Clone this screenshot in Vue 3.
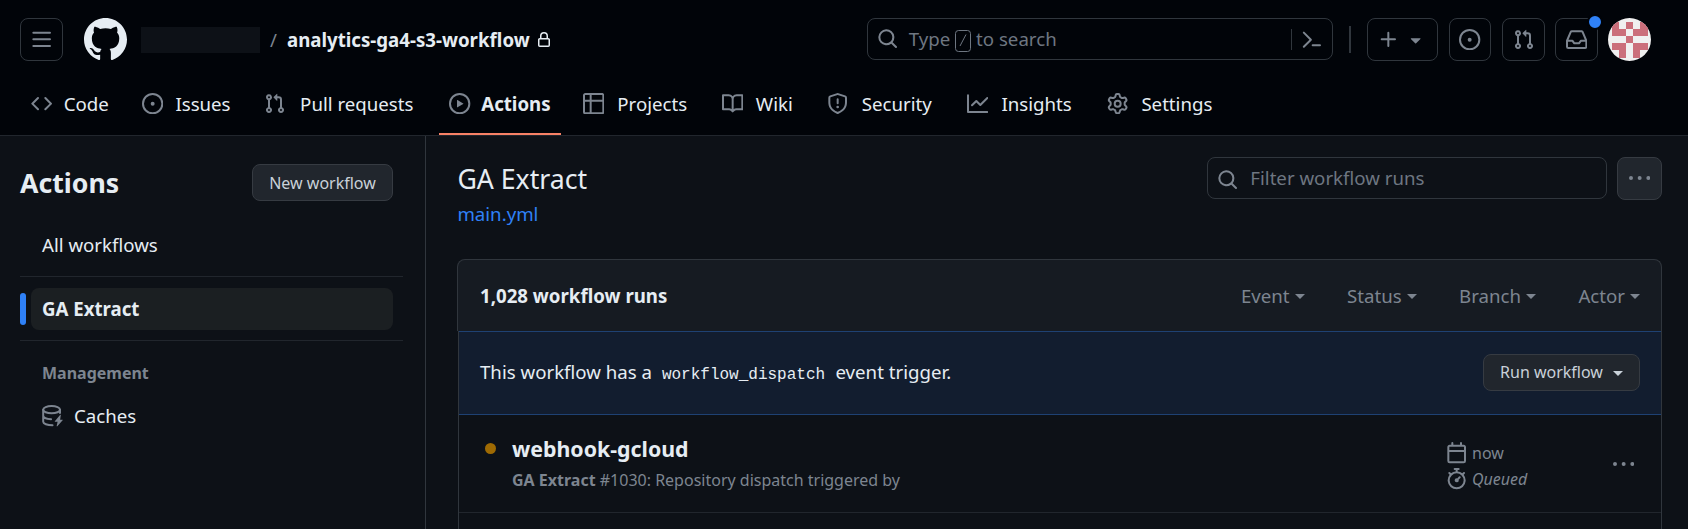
<script setup>
const icons = {
  menu: 'M1 2.75A.75.75 0 0 1 1.75 2h12.5a.75.75 0 0 1 0 1.5H1.75A.75.75 0 0 1 1 2.75Zm0 5A.75.75 0 0 1 1.75 7h12.5a.75.75 0 0 1 0 1.5H1.75A.75.75 0 0 1 1 7.75ZM1.75 12h12.5a.75.75 0 0 1 0 1.5H1.75a.75.75 0 0 1 0-1.5Z',
  mark: 'M8 0c4.42 0 8 3.58 8 8a8.013 8.013 0 0 1-5.45 7.59c-.4.08-.55-.17-.55-.38 0-.27.01-1.13.01-2.2 0-.75-.25-1.23-.54-1.48 1.78-.2 3.65-.88 3.65-3.95 0-.88-.31-1.59-.82-2.15.08-.2.36-1.02-.08-2.12 0 0-.67-.22-2.2.82-.64-.18-1.32-.27-2-.27-.68 0-1.36.09-2 .27-1.53-1.03-2.2-.82-2.2-.82-.44 1.1-.16 1.92-.08 2.12-.51.56-.82 1.28-.82 2.15 0 3.06 1.86 3.75 3.64 3.95-.23.2-.44.55-.51 1.07-.46.21-1.61.55-2.33-.66-.15-.24-.6-.83-1.23-.82-.67.01-.27.38.01.53.34.19.73.9.82 1.13.16.45.68 1.31 2.69.94 0 .67.01 1.3.01 1.49 0 .21-.15.45-.55.38A7.995 7.995 0 0 1 0 8c0-4.42 3.58-8 8-8Z',
  lock: 'M4 4a4 4 0 0 1 8 0v2h.25c.966 0 1.75.784 1.75 1.75v5.5A1.75 1.75 0 0 1 12.25 15h-8.5A1.75 1.75 0 0 1 2 13.25v-5.5C2 6.784 2.784 6 3.75 6H4Zm8.25 3.5h-8.5a.25.25 0 0 0-.25.25v5.5c0 .138.112.25.25.25h8.5a.25.25 0 0 0 .25-.25v-5.5a.25.25 0 0 0-.25-.25ZM10.5 6V4a2.5 2.5 0 1 0-5 0v2Z',
  search: 'M10.68 11.74a6 6 0 0 1-7.922-8.982 6 6 0 0 1 8.982 7.922l3.04 3.04a.749.749 0 0 1-.326 1.275.749.749 0 0 1-.734-.215ZM11.5 7a4.499 4.499 0 1 0-8.997 0A4.499 4.499 0 0 0 11.5 7Z',
  terminal: 'm6.354 8.04-4.773 4.773a.75.75 0 1 0 1.061 1.06L7.945 8.57a.75.75 0 0 0 0-1.06L2.642 2.206a.75.75 0 0 0-1.06 1.061L6.353 8.04ZM8.75 11.5a.75.75 0 0 0 0 1.5h5.5a.75.75 0 0 0 0-1.5h-5.5Z',
  plus: 'M7.75 2a.75.75 0 0 1 .75.75V7h4.25a.75.75 0 0 1 0 1.5H8.5v4.25a.75.75 0 0 1-1.5 0V8.5H2.75a.75.75 0 0 1 0-1.5H7V2.75A.75.75 0 0 1 7.75 2Z',
  caret: 'm4.427 7.427 3.396 3.396a.25.25 0 0 0 .354 0l3.396-3.396A.25.25 0 0 0 11.396 7H4.604a.25.25 0 0 0-.177.427Z',
  issue: 'M8 9.5a1.5 1.5 0 1 0 0-3 1.5 1.5 0 0 0 0 3ZM8 0a8 8 0 1 1 0 16A8 8 0 0 1 8 0ZM1.5 8a6.5 6.5 0 1 0 13 0 6.5 6.5 0 0 0-13 0Z',
  pull: 'M1.5 3.25a2.25 2.25 0 1 1 3 2.122v5.256a2.251 2.251 0 1 1-1.5 0V5.372A2.25 2.25 0 0 1 1.5 3.25Zm5.677-.177L9.573.677A.25.25 0 0 1 10 .854V2.5h1A2.5 2.5 0 0 1 13.5 5v5.628a2.251 2.251 0 1 1-1.5 0V5a1 1 0 0 0-1-1h-1v1.646a.25.25 0 0 1-.427.177L7.177 3.427a.25.25 0 0 1 0-.354ZM3.75 2.5a.75.75 0 1 0 0 1.5.75.75 0 0 0 0-1.5Zm0 9.5a.75.75 0 1 0 0 1.5.75.75 0 0 0 0-1.5Zm8.25.75a.75.75 0 1 0 1.5 0 .75.75 0 0 0-1.5 0Z',
  inbox: 'M2.8 2.06A1.75 1.75 0 0 1 4.41 1h7.18c.7 0 1.333.417 1.61 1.06l2.74 6.395c.04.093.06.194.06.295v4.5A1.75 1.75 0 0 1 14.25 15H1.75A1.75 1.75 0 0 1 0 13.25v-4.5c0-.101.02-.202.06-.295Zm1.61.44a.25.25 0 0 0-.23.152L1.887 8H4.75a.75.75 0 0 1 .6.3L6.625 10h2.75l1.275-1.7a.75.75 0 0 1 .6-.3h2.863L11.82 2.652a.25.25 0 0 0-.23-.152Zm10.09 7h-2.875l-1.275 1.7a.75.75 0 0 1-.6.3h-3.5a.75.75 0 0 1-.6-.3L4.375 9.5H1.5v3.75c0 .138.112.25.25.25h12.5a.25.25 0 0 0 .25-.25Z',
  code: 'm11.28 3.22 4.25 4.25a.75.75 0 0 1 0 1.06l-4.25 4.25a.749.749 0 0 1-1.275-.326.749.749 0 0 1 .215-.734L13.94 8l-3.72-3.72a.749.749 0 0 1 .326-1.275.749.749 0 0 1 .734.215Zm-6.56 0a.751.751 0 0 1 1.042.018.751.751 0 0 1 .018 1.042L2.06 8l3.72 3.72a.749.749 0 0 1-.326 1.275.749.749 0 0 1-.734-.215L.47 8.53a.75.75 0 0 1 0-1.06Z',
  play: 'M8 0a8 8 0 1 1 0 16A8 8 0 0 1 8 0ZM1.5 8a6.5 6.5 0 1 0 13 0 6.5 6.5 0 0 0-13 0Zm4.879-2.773 4.264 2.559a.25.25 0 0 1 0 .428l-4.264 2.559A.25.25 0 0 1 6 10.559V5.442a.25.25 0 0 1 .379-.215Z',
  table: 'M0 1.75C0 .784.784 0 1.75 0h12.5C15.216 0 16 .784 16 1.75v12.5A1.75 1.75 0 0 1 14.25 16H1.75A1.75 1.75 0 0 1 0 14.25ZM6.5 6.5v8h7.75a.25.25 0 0 0 .25-.25V6.5Zm8-1.5V1.75a.25.25 0 0 0-.25-.25H6.5V5Zm-13 1.5v7.75c0 .138.112.25.25.25H5v-8ZM5 5V1.5H1.75a.25.25 0 0 0-.25.25V5Z',
  book: 'M0 1.75A.75.75 0 0 1 .75 1h4.253c1.227 0 2.317.59 3 1.501A3.743 3.743 0 0 1 11.006 1h4.245a.75.75 0 0 1 .75.75v10.5a.75.75 0 0 1-.75.75h-4.507a2.25 2.25 0 0 0-1.591.659l-.622.621a.75.75 0 0 1-1.06 0l-.622-.621A2.25 2.25 0 0 0 5.258 13H.75a.75.75 0 0 1-.75-.75Zm7.251 10.324.004-5.073-.002-2.253A2.25 2.25 0 0 0 5.003 2.5H1.5v9h3.757a3.75 3.75 0 0 1 1.994.574ZM8.755 4.75l-.004 7.322a3.752 3.752 0 0 1 1.992-.572H14.5v-9h-3.495a2.25 2.25 0 0 0-2.25 2.25Z',
  shield: 'M7.467.133a1.748 1.748 0 0 1 1.066 0l5.25 1.68A1.75 1.75 0 0 1 15 3.48V7c0 1.566-.32 3.182-1.303 4.682-.983 1.498-2.585 2.813-5.032 3.855a1.697 1.697 0 0 1-1.33 0c-2.447-1.042-4.049-2.357-5.032-3.855C1.32 10.182 1 8.566 1 7V3.48a1.75 1.75 0 0 1 1.217-1.667Zm.61 1.429a.25.25 0 0 0-.153 0l-5.25 1.68a.25.25 0 0 0-.174.238V7c0 1.358.275 2.666 1.057 3.86.784 1.194 2.121 2.34 4.366 3.297a.196.196 0 0 0 .154 0c2.245-.956 3.582-2.104 4.366-3.298C13.225 9.666 13.5 8.36 13.5 7V3.48a.251.251 0 0 0-.174-.237l-5.25-1.68ZM8.75 4.75v3a.75.75 0 0 1-1.5 0v-3a.75.75 0 0 1 1.5 0ZM9 10.5a1 1 0 1 1-2 0 1 1 0 0 1 2 0Z',
  graph: 'M1.5 1.75V13.5h13.75a.75.75 0 0 1 0 1.5H.75a.75.75 0 0 1-.75-.75V1.75a.75.75 0 0 1 1.5 0Zm14.28 2.53-5.25 5.25a.75.75 0 0 1-1.06 0L7 7.06 4.28 9.78a.751.751 0 0 1-1.042-.018.751.751 0 0 1-.018-1.042l3.25-3.25a.75.75 0 0 1 1.06 0L10 7.94l4.72-4.72a.751.751 0 0 1 1.042.018.751.751 0 0 1 .018 1.042Z',
  gear: 'M8 0a8.2 8.2 0 0 1 .701.031C9.444.095 9.99.645 10.16 1.29l.288 1.107c.018.066.079.158.212.224.231.114.454.243.668.386.123.082.233.09.299.071l1.103-.303c.644-.176 1.392.021 1.82.63.27.385.506.792.704 1.218.315.675.111 1.422-.364 1.891l-.814.806c-.049.048-.098.147-.088.294.016.257.016.515 0 .772-.01.147.038.246.088.294l.814.806c.475.469.679 1.216.364 1.891a7.977 7.977 0 0 1-.704 1.217c-.428.61-1.176.807-1.82.63l-1.102-.302c-.067-.019-.177-.011-.3.071a5.909 5.909 0 0 1-.668.386c-.133.066-.194.158-.211.224l-.29 1.106c-.168.646-.715 1.196-1.458 1.26a8.006 8.006 0 0 1-1.402 0c-.743-.064-1.289-.614-1.458-1.26l-.289-1.106c-.018-.066-.079-.158-.212-.224a5.738 5.738 0 0 1-.668-.386c-.123-.082-.233-.09-.299-.071l-1.103.303c-.644.176-1.392-.021-1.82-.63a8.12 8.12 0 0 1-.704-1.218c-.315-.675-.111-1.422.363-1.891l.815-.806c.05-.048.098-.147.088-.294a6.214 6.214 0 0 1 0-.772c.01-.147-.038-.246-.088-.294l-.815-.806C.635 6.045.431 5.298.746 4.623a7.92 7.92 0 0 1 .704-1.217c.428-.61 1.176-.807 1.82-.63l1.102.302c.067.019.177.011.3-.071.214-.143.437-.272.668-.386.133-.066.194-.158.211-.224l.29-1.106C6.009.645 6.556.095 7.299.03 7.53.01 7.764 0 8 0Zm-.571 1.525c-.036.003-.108.036-.137.146l-.289 1.105c-.147.561-.549.967-.998 1.189-.173.086-.34.183-.5.29-.417.278-.97.423-1.529.27l-1.103-.303c-.109-.03-.175.016-.195.045-.22.312-.412.644-.573.99-.014.031-.021.11.059.19l.815.806c.411.406.562.957.53 1.456a4.709 4.709 0 0 0 0 .582c.032.499-.119 1.05-.53 1.456l-.815.806c-.081.08-.073.159-.059.19.162.346.353.677.573.989.02.03.085.076.195.046l1.102-.303c.56-.153 1.113-.008 1.53.27.161.107.328.204.501.29.447.222.85.629.997 1.189l.289 1.105c.029.109.101.143.137.146a6.6 6.6 0 0 0 1.142 0c.036-.003.108-.036.137-.146l.289-1.105c.147-.561.549-.967.998-1.189.173-.086.34-.183.5-.29.417-.278.97-.423 1.529-.27l1.103.303c.109.029.175-.016.195-.045.22-.313.411-.644.573-.99.014-.031.021-.11-.059-.19l-.815-.806c-.411-.406-.562-.957-.53-1.456a4.709 4.709 0 0 0 0-.582c-.032-.499.119-1.05.53-1.456l.815-.806c.081-.08.073-.159.059-.19a6.464 6.464 0 0 0-.573-.989c-.02-.03-.085-.076-.195-.046l-1.102.303c-.56.153-1.113.008-1.53-.27a4.44 4.44 0 0 0-.501-.29c-.447-.222-.85-.629-.997-1.189l-.289-1.105c-.029-.11-.101-.143-.137-.146a6.6 6.6 0 0 0-1.142 0ZM11 8a3 3 0 1 1-6 0 3 3 0 0 1 6 0ZM9.5 8a1.5 1.5 0 1 0-3.001.001A1.5 1.5 0 0 0 9.5 8Z',
  kebab: 'M8 9a1.5 1.5 0 1 0 0-3 1.5 1.5 0 0 0 0 3ZM1.5 9a1.5 1.5 0 1 0 0-3 1.5 1.5 0 0 0 0 3Zm13 0a1.5 1.5 0 1 0 0-3 1.5 1.5 0 0 0 0 3Z',
  calendar: 'M4.75 0a.75.75 0 0 1 .75.75V2h5V.75a.75.75 0 0 1 1.5 0V2h1.25c.966 0 1.75.784 1.75 1.75v10.5A1.75 1.75 0 0 1 13.25 16H2.75A1.75 1.75 0 0 1 1 14.25V3.75C1 2.784 1.784 2 2.75 2H4V.75A.75.75 0 0 1 4.75 0ZM2.5 7.5v6.75c0 .138.112.25.25.25h10.5a.25.25 0 0 0 .25-.25V7.5Zm10.75-4H2.75a.25.25 0 0 0-.25.25V6h11V3.75a.25.25 0 0 0-.25-.25Z',
  stopwatch: 'M5.75.75A.75.75 0 0 1 6.5 0h3a.75.75 0 0 1 0 1.5h-.75v1l-.001.041a6.724 6.724 0 0 1 3.464 1.435l.007-.006.75-.75a.749.749 0 0 1 1.275.326.749.749 0 0 1-.215.734l-.75.75-.006.007a6.75 6.75 0 1 1-10.548 0L2.72 5.03l-.75-.75a.751.751 0 0 1 .018-1.042.751.751 0 0 1 1.042-.018l.75.75.007.006A6.72 6.72 0 0 1 7.25 2.541V1.5H6.5a.75.75 0 0 1-.75-.75ZM8 14.5a5.25 5.25 0 1 0-.001-10.501A5.25 5.25 0 0 0 8 14.5Zm.389-6.7 1.33-1.33a.75.75 0 1 1 1.061 1.06L9.45 8.861A1.503 1.503 0 0 1 8 10.75a1.499 1.499 0 1 1 .389-2.95Z',
}

const tabs = [
  { label: 'Code', icon: 'code' },
  { label: 'Issues', icon: 'issue' },
  { label: 'Pull requests', icon: 'pull' },
  { label: 'Actions', icon: 'play', active: true },
  { label: 'Projects', icon: 'table' },
  { label: 'Wiki', icon: 'book' },
  { label: 'Security', icon: 'shield' },
  { label: 'Insights', icon: 'graph' },
  { label: 'Settings', icon: 'gear' },
]
const filters = ['Event', 'Status', 'Branch', 'Actor']
</script>

<template>
  <div class="page">
    <header>
      <div class="bar">
        <button class="box menu"><svg class="ic" viewBox="0 0 16 16"><path :d="icons.menu" /></svg></button>
        <svg class="mark" viewBox="0 0 16 16"><path :d="icons.mark" /></svg>
        <span class="owner"></span>
        <span class="slash">/</span>
        <strong class="repo">analytics-ga4-s3-workflow</strong>
        <svg class="lock" viewBox="0 0 16 16"><path :d="icons.lock" /></svg>
        <div class="search">
          <svg class="ic" viewBox="0 0 16 16"><path :d="icons.search" /></svg>
          <span class="hint">Type <kbd><svg viewBox="0 0 16 22"><rect x=".5" y=".5" width="15" height="21" rx="3" /><path d="M5 16 11 4.5" /></svg></kbd> to search</span>
          <span class="cmd"><svg class="ic" viewBox="0 0 16 16"><path :d="icons.terminal" /></svg></span>
        </div>
        <span class="rule"></span>
        <button class="box add">
          <svg class="ic" viewBox="0 0 16 16"><path :d="icons.plus" /></svg>
          <svg class="ic" viewBox="0 0 16 16"><path :d="icons.caret" /></svg>
        </button>
        <button class="box issues"><svg class="ic" viewBox="0 0 16 16"><path :d="icons.issue" /></svg></button>
        <button class="box"><svg class="ic" viewBox="0 0 16 16"><path :d="icons.pull" /></svg></button>
        <button class="box"><svg class="ic" viewBox="0 0 16 16"><path :d="icons.inbox" /></svg><i class="unread"></i></button>
        <svg class="avatar" viewBox="0 0 43 43">
          <rect width="43" height="43" fill="#f0f0f0" />
          <path fill="#cb6f7b" shape-rendering="crispEdges" d="M3.5 3.5h7.2v7.2h7.2v7.2H3.5ZM17.9 3.5h7.2v7.2h-7.2ZM32.3 3.5h7.2v14.4H25.1v-7.2h7.2ZM17.9 17.9h7.2v7.2h-7.2ZM3.5 25.1h14.4v14.4h-7.2v-7.2H3.5ZM25.1 25.1h14.4v7.2h-7.2v7.2h-7.2Z" />
        </svg>
      </div>
      <nav>
        <a v-for="t in tabs" :key="t.label" :class="{ active: t.active }">
          <svg class="ic" viewBox="0 0 16 16"><path :d="icons[t.icon]" /></svg>
          <span class="tab" :data-label="t.label">{{ t.label }}</span>
        </a>
      </nav>
    </header>

    <div class="body">
      <aside>
        <div class="side-head">
          <h2>Actions</h2>
          <button class="btn new">New workflow</button>
        </div>
        <a class="item all">All workflows</a>
        <hr />
        <a class="item current">GA Extract</a>
        <hr />
        <h3>Management</h3>
        <a class="item caches">
          <svg class="ic line" viewBox="0 0 16 16">
            <ellipse cx="7.2" cy="3.5" rx="6.3" ry="2.75" />
            <path d="M.9 3.5v9c0 1.5 3 2.75 7 2.75M13.5 3.5V6M.9 8c0 1.4 2.6 2.5 5.9 2.6" />
            <path class="bolt" d="m13.7 7.4-4.1 4.7a.25.25 0 0 0 .2.4h1.9l-.7 3.3c0 .3.3.4.5.2l4-4.6a.25.25 0 0 0-.2-.4h-1.7l.5-3.4c0-.3-.2-.4-.4-.2Z" />
          </svg>
          Caches
        </a>
      </aside>

      <main>
        <div class="top">
          <div>
            <h1>GA Extract</h1>
            <a class="file">main.yml</a>
          </div>
          <div class="tools">
            <div class="filter">
              <svg class="ic" viewBox="0 0 16 16"><path :d="icons.search" /></svg>
              <span>Filter workflow runs</span>
            </div>
            <button class="btn more"><svg class="ic" viewBox="0 0 16 16"><path :d="icons.kebab" /></svg></button>
          </div>
        </div>

        <section>
          <div class="runs-head">
            <strong>1,028 workflow runs</strong>
            <div class="filters">
              <span v-for="f in filters" :key="f">{{ f }}<i class="tri"></i></span>
            </div>
          </div>
          <div class="rows">
            <div class="dispatch">
              <p>This workflow has a <code>workflow_dispatch</code> event trigger.</p>
              <button class="btn run-btn">Run workflow<i class="tri"></i></button>
            </div>
            <div class="run">
              <i class="status"></i>
              <div class="info">
                <strong>webhook-gcloud</strong>
                <p><b>GA Extract</b> #1030: Repository dispatch triggered by</p>
              </div>
              <div class="meta">
                <span><svg class="ic" viewBox="0 0 16 16"><path :d="icons.calendar" /></svg>now</span>
                <span><svg class="ic" viewBox="0 0 16 16"><path :d="icons.stopwatch" /></svg><em>Queued</em></span>
              </div>
              <svg class="ic dots" viewBox="0 0 16 16"><path :d="icons.kebab" /></svg>
            </div>
          </div>
        </section>
      </main>
    </div>
  </div>
</template>

<style>
body { background: #0d1117; overflow: hidden; }
</style>

<style scoped>
* { box-sizing: border-box; }
.page {
  width: 1688px; height: 529px; overflow: hidden; display: flex; flex-direction: column;
  background: #0d1117; color: #e6edf3;
  font: 18.67px/28px "Noto Sans", "Liberation Sans", sans-serif;
}
button { font: inherit; padding: 0; cursor: pointer; }
h1, h2, h3, p { margin: 0; }
.ic { width: 21.33px; height: 21.33px; flex: none; fill: #7d8590; display: block; }

header { height: 136px; flex: none; background: #010409; border-bottom: 1px solid #21262d; }
.bar { height: 72px; padding: 18px 0 11px 20px; display: flex; align-items: center; }
.box {
  position: relative; width: 43px; height: 43px; flex: none; display: flex; align-items: center; justify-content: center;
  background: transparent; border: 1px solid #30363d; border-radius: 8px; margin-right: 10px;
}
.menu { margin-right: 21px; }
.issues { width: 42px; margin-right: 11px; }
.mark { width: 43px; height: 43px; fill: #e6edf3; flex: none; }
.owner { width: 119px; height: 26px; margin: 1px 0 0 14px; background: #0d1117; }
.slash { margin: 1px 0 0 10px; width: 17px; color: #7d8590; }
.repo { font-weight: 700; margin-top: 1px; }
.lock { width: 16px; height: 16px; margin-left: 6px; fill: #e6edf3; }
.search {
  margin-left: auto; width: 466px; height: 42px; border: 1px solid #30363d; border-radius: 8px;
  display: flex; align-items: center; padding: 0 10px 0 9px; color: #6e7681; align-self: flex-start;
}
.hint { display: flex; align-items: center; white-space: pre; margin-left: 10.5px; }
kbd { width: 16px; height: 22px; margin: 3px 0 0 0; }
kbd svg { display: block; width: 16px; height: 22px; fill: none; stroke: #6e7681; }
.cmd { margin-left: auto; height: 21px; border-left: 1px solid #30363d; padding-left: 9px; }
.rule { width: 2px; height: 27px; background: #30363d; margin: 0 16px; }
.add { width: 71px; gap: 6px; margin-right: 11px; }
.add .ic:first-child { margin-left: -1px; }
.unread {
  position: absolute; right: -5.5px; top: -5px; width: 16px; height: 16px; border-radius: 50%;
  background: #2f81f7; border: 2.5px solid #010409;
}
.avatar { width: 43px; height: 43px; border-radius: 50%; margin-right: 37px; flex: none; }

nav { display: flex; gap: 10.85px; padding-left: 20.3px; }
nav a { position: relative; height: 63px; display: flex; align-items: center; gap: 10.67px; padding: 0 10.67px; }
.tab { text-align: center; }
.tab::after { content: attr(data-label); display: block; height: 0; visibility: hidden; font-weight: 700; overflow: hidden; }
.active .tab { font-weight: 700; }
.active::after { content: ""; position: absolute; inset: auto 0 0; height: 2px; background: #f78166; }

.body { flex: 1; display: flex; }
aside { width: 426px; flex: none; border-right: 1px solid #30363d; padding: 28px 22px 0 20px; }
.side-head { display: flex; align-items: center; justify-content: space-between; height: 37px; padding-right: 10px; }
h2 { font-size: 26.67px; font-weight: 700; line-height: 36px; }
.btn {
  height: 37px; border: 1px solid #363b42; border-radius: 8px; background: #21262d; color: #c9d1d9;
  font-size: 16px; flex: none; display: flex; align-items: center; justify-content: center;
}
.new { width: 141px; }
.item { display: flex; align-items: center; height: 42px; margin: 0 10px 0 11px; padding-left: 11px; border-radius: 8px; }
.all { margin-top: 23px; }
hr { border: 0; border-top: 1px solid #21262d; margin: 10px 0 11px; width: 383px; }
.current { position: relative; background: #1b1f22; font-weight: 700; margin-top: 11px; }
.current::before { content: ""; position: absolute; left: -11px; top: 5px; width: 6px; height: 32px; border-radius: 4px; background: #2f81f7; }
h3 { font-size: 16px; font-weight: 700; color: #7d8590; margin: 21px 0 0 22px; line-height: 22px; }
.caches { margin-top: 11px; gap: 10.67px; }
.line { fill: none; stroke: #7d8590; stroke-width: 1.5; stroke-linecap: round; }
.bolt { fill: #7d8590; stroke: none; }

main { flex: 1; padding: 21px 26px 0 31px; }
.top { display: flex; justify-content: space-between; height: 102px; padding-left: .4px; }
h1 { font-size: 26.67px; font-weight: 400; line-height: 43px; }
.file { display: block; line-height: 27px; color: #2f81f7; }
.tools { display: flex; gap: 10px; align-items: flex-start; }
.filter {
  width: 400px; height: 42px; border: 1px solid #30363d; border-radius: 8px; color: #6e7681;
  display: flex; align-items: center; gap: 12px; padding-left: 9px;
}
.filter .ic { margin-top: 3px; }
.more { width: 45px; height: 43px; }

.runs-head {
  height: 72px; background: #161b22; border: 1px solid #30363d; border-bottom: 0; border-radius: 8px 8px 0 0;
  display: flex; align-items: center; justify-content: space-between; padding: 0 21px 0 22px;
}
.filters { display: flex; gap: 42.4px; color: #7d8590; }
.filters span { display: flex; align-items: center; }
.tri { width: 0; height: 0; border: 5px solid transparent; border-top-color: currentColor; border-bottom: 0; margin: 2px 0 0 5px; }
.rows { margin-left: 1px; border: solid #30363d; border-width: 0 1px; height: 210px; }
.dispatch {
  height: 84px; background: #121d2f; border: solid #1e4173; border-width: 1px 0;
  display: flex; align-items: center; justify-content: space-between; padding: 0 21px 2px 21px;
}
code { font: 16px "Liberation Mono", monospace; padding: 3px 5.5px 3px 5px; }
.run-btn { width: 157px; }
.run-btn .tri { margin-left: 10px; }
.run { display: flex; height: 98px; border-bottom: 1px solid #21262d; position: relative; }
.status { width: 11px; height: 11px; border-radius: 50%; background: #9e6a03; margin: 28px 16px 0 26px; }
.info { flex: 1; padding-top: 18px; }
.info strong { display: block; font-size: 21.33px; line-height: 32px; }
.info p { font-size: 16px; line-height: 31px; color: #7d8590; }
.meta { width: 167px; padding-top: 25px; font-size: 16px; color: #7d8590; }
.meta span { display: flex; align-items: center; gap: 5px; height: 26px; }
.dots { margin: 39px 27px 0 0; }
</style>
